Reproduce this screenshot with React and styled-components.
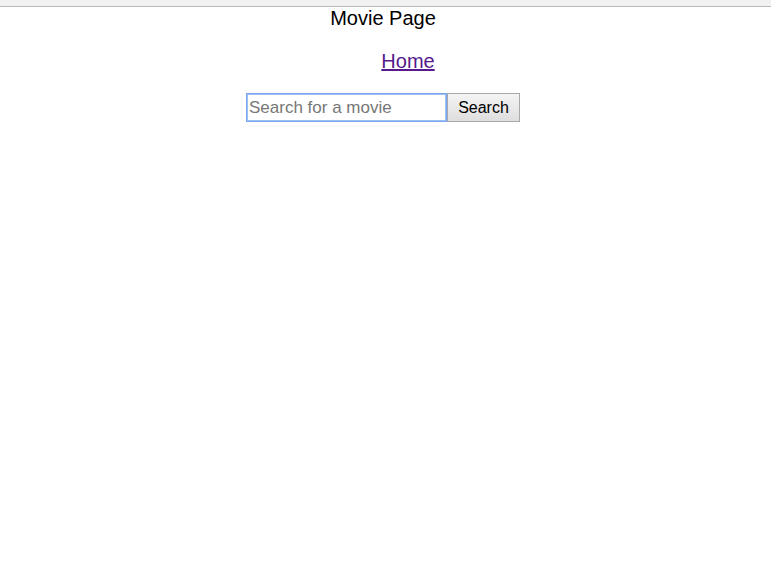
import React from "react";
import styled, { createGlobalStyle } from "styled-components";

const Global = createGlobalStyle`
  html, body { margin: 0; padding: 0; background: #fff; }
  body { font-family: "Liberation Sans", Arial, sans-serif; }
`;

const TopBar = styled.div`
  height: 6px;
  background: #f1f1f1;
  border-bottom: 1px solid #b9b9b9;
`;

const Page = styled.div`
  display: flex;
  flex-direction: column;
  align-items: center;
  padding-right: 5px;
`;

const Title = styled.h1`
  margin: 0;
  font-size: 20px;
  font-weight: normal;
  line-height: 23px;
  color: #000;
`;

const NavList = styled.ul`
  list-style: none;
  margin: 20px 0 0;
  padding: 0 0 0 50px;
  align-self: stretch;
  text-align: center;
`;

const NavLink = styled.a`
  font-size: 20px;
  line-height: 23px;
  color: #551a8b;
  text-decoration: underline;
`;

const Form = styled.form`
  display: flex;
  margin-top: 20px;
`;

const Input = styled.input`
  box-sizing: border-box;
  width: 201px;
  height: 29px;
  border: 1px solid #7aa6f0;
  outline: 1px solid #9fc0f5;
  outline-offset: -2px;
  padding: 0 2px;
  font-family: "Liberation Sans", Arial, sans-serif;
  font-size: 17px;
  color: #000;
  &::placeholder { color: #777; }
`;

const Button = styled.button`
  box-sizing: border-box;
  width: 73px;
  height: 29px;
  border: 1px solid #a9a9a9;
  background: linear-gradient(#f4f4f4, #dedede);
  font-family: "Liberation Sans", Arial, sans-serif;
  font-size: 16px;
  color: #000;
  padding: 0;
`;

export default function App() {
  return (
    <>
      <Global />
      <TopBar />
      <Page>
        <Title>Movie Page</Title>
        <NavList>
          <li>
            <NavLink href="#">Home</NavLink>
          </li>
        </NavList>
        <Form onSubmit={(e) => e.preventDefault()}>
          <Input placeholder="Search for a movie" />
          <Button type="submit">Search</Button>
        </Form>
      </Page>
    </>
  );
}
